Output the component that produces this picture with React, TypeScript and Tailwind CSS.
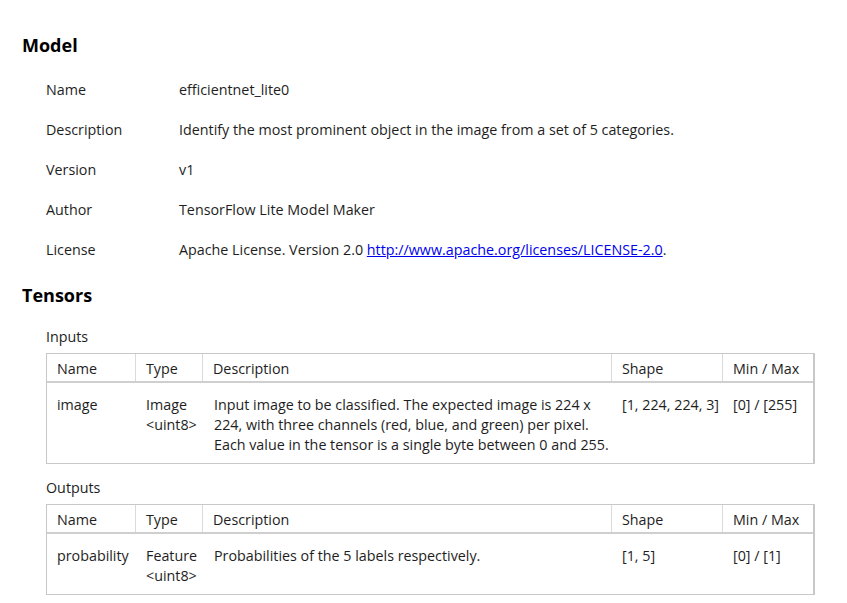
const font = { fontFamily: '"Segoe UI", "Open Sans", "Noto Sans", sans-serif' };

type Row = {
  name: string;
  type: string[];
  desc: string[];
  shape: string;
  range: string;
};

const modelInfo = [
  { label: "Name", value: "efficientnet_lite0" },
  { label: "Description", value: "Identify the most prominent object in the image from a set of 5 categories." },
  { label: "Version", value: "v1" },
  { label: "Author", value: "TensorFlow Lite Model Maker" },
];

function TensorTable({ row }: { row: Row }) {
  const headers = ["Name", "Type", "Description", "Shape", "Min / Max"];
  const widths = ["w-[89px]", "w-[67px]", "w-[409px]", "w-[111px]", "w-[92px]"];
  return (
    <div className="w-[769px] border border-[#c8c8c8] border-r-2">
      <div className="flex h-[29px] border-b-2 border-[#cfcfcf]">
        {headers.map((h, i) => (
          <div
            key={h}
            className={`${widths[i]} shrink-0 pl-[10px] pt-[3px] flex items-center ${i < 4 ? "border-r border-[#dadada]" : ""}`}
          >
            {h}
          </div>
        ))}
      </div>
      <div className="flex pt-[12px] pb-[8px] leading-[20px]">
        <div className={`${widths[0]} shrink-0 pl-[10px]`}>{row.name}</div>
        <div className={`${widths[1]} shrink-0 pl-[10px]`}>
          {row.type.map((t) => (
            <div key={t}>{t}</div>
          ))}
        </div>
        <div className={`${widths[2]} shrink-0 pl-[11px] whitespace-nowrap`}>
          {row.desc.map((d) => (
            <div key={d}>{d}</div>
          ))}
        </div>
        <div className={`${widths[3]} shrink-0 pl-[10px]`}>{row.shape}</div>
        <div className={`${widths[4]} shrink-0 pl-[10px]`}>{row.range}</div>
      </div>
    </div>
  );
}

export default function App() {
  return (
    <div className="min-h-screen bg-white text-[14.3px] text-[#1e1e1e] pl-[22px] pt-[33px]" style={font}>
      {/* Model */}
      <h2 className="text-[18px] font-bold leading-[24px] text-black">Model</h2>
      <div className="pl-[24px] pt-[22px]">
        {modelInfo.map((m) => (
          <div key={m.label} className="flex h-[40px] items-start">
            <div className="w-[133px] shrink-0">{m.label}</div>
            <div>{m.value}</div>
          </div>
        ))}
        <div className="flex h-[44px] items-start">
          <div className="w-[133px] shrink-0">License</div>
          <div>
            Apache License. Version 2.0{" "}
            <a href="#" className="text-[#0000ee] underline">
              http://www.apache.org/licenses/LICENSE-2.0
            </a>
            .
          </div>
        </div>
      </div>

      {/* Tensors */}
      <h2 className="text-[18px] font-bold leading-[24px] text-black">Tensors</h2>
      <div className="pl-[24px] pt-[20px]">
        <div className="h-[26px] leading-[20px]">Inputs</div>
        <TensorTable
          row={{
            name: "image",
            type: ["Image", "<uint8>"],
            desc: [
              "Input image to be classified. The expected image is 224 x",
              "224, with three channels (red, blue, and green) per pixel.",
              "Each value in the tensor is a single byte between 0 and 255.",
            ],
            shape: "[1, 224, 224, 3]",
            range: "[0] / [255]",
          }}
        />
        <div className="h-[40px] pt-[14px] leading-[20px]">Outputs</div>
        <TensorTable
          row={{
            name: "probability",
            type: ["Feature", "<uint8>"],
            desc: ["Probabilities of the 5 labels respectively."],
            shape: "[1, 5]",
            range: "[0] / [1]",
          }}
        />
      </div>
    </div>
  );
}
